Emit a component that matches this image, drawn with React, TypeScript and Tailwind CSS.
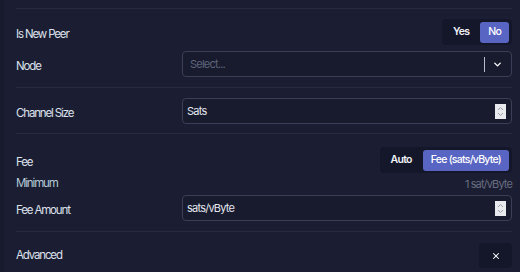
import { ChevronDown, X } from 'lucide-react';

// ─── Small pieces ────────────────────────────────────────────────────────────

const Divider = () => <div className="h-px bg-[#272b40]" />;

const Label = ({ children, tone = 'text-[#dde1ec]' }: { children: React.ReactNode; tone?: string }) => (
  <span className={`text-[11.5px] tracking-[-0.1em] ${tone}`}>{children}</span>
);

const Toggle = ({ options, active }: { options: string[]; active: number }) => (
  <div className="flex h-[26px] items-center gap-[3px] rounded-[4px] bg-[#14172a] p-[3px]">
    {options.map((o, i) => (
      <button
        key={o}
        className={`h-[21px] rounded-[3px] px-[8px] text-[10.5px] tracking-[-0.07em] ${
          i === active
            ? 'bg-[#5865c2] font-medium text-white'
            : 'font-semibold text-[#f1f2f7]'
        }`}
      >
        {o}
      </button>
    ))}
  </div>
);

const Stepper = () => (
  <div className="flex h-[15px] w-[11px] items-center justify-center bg-[#e9eaee]">
    <svg width="7" height="11" viewBox="0 0 7 11" fill="none" stroke="#9a9caa" strokeWidth="1">
      <path d="M1 4 L3.5 1.5 L6 4" />
      <path d="M1 7 L3.5 9.5 L6 7" />
    </svg>
  </div>
);

const Field = ({ children }: { children: React.ReactNode }) => (
  <div className="flex h-[26px] w-[330px] items-center rounded-[4px] border border-[#3a3f57] bg-[#181b2e] pl-[4px] pr-[5px]">
    {children}
  </div>
);

const Row = ({ label, children, className = '' }: { label: React.ReactNode; children: React.ReactNode; className?: string }) => (
  <div className={`flex items-center justify-between ${className}`}>
    <div className="w-[166px]">{label}</div>
    {children}
  </div>
);

// ─── Main ────────────────────────────────────────────────────────────────────

export default function App() {
  return (
    <div
      className="flex h-[272px] w-[520px] bg-[#1b1e32]"
      style={{ fontFamily: 'Inter, "Noto Sans", sans-serif' }}
    >
      <div className="w-[4px] bg-[#181b2d]" />
      <div className="flex flex-1 flex-col pl-[12px] pr-[8px] pt-[8px]">
        <Divider />

        {/* peer + node */}
        <Row label={<Label>Is New Peer</Label>} className="mt-[10px]">
          <Toggle options={['Yes', 'No']} active={1} />
        </Row>
        <Row label={<Label>Node</Label>} className="mt-[6px]">
          <Field>
            <span className="flex-1 pl-[3px] text-[11px] tracking-[-0.07em] text-[#5f6479]">Select...</span>
            <div className="mr-[7px] h-[15px] w-px bg-[#b9bccb]" />
            <ChevronDown className="mr-[3px] h-[11px] w-[11px] text-white" strokeWidth={3} />
          </Field>
        </Row>

        <div className="mt-[10px]">
          <Divider />
        </div>

        {/* channel size */}
        <Row label={<Label>Channel Size</Label>} className="mt-[10px]">
          <Field>
            <span className="flex-1 text-[11px] tracking-[-0.07em] text-[#e3e6ef]">Sats</span>
            <Stepper />
          </Field>
        </Row>

        <div className="mt-[9px]">
          <Divider />
        </div>

        {/* fee */}
        <Row label={<Label>Fee</Label>} className="mt-[13px]">
          <Toggle options={['Auto', 'Fee (sats/vByte)']} active={1} />
        </Row>
        <div className="mt-[4px] flex h-[14px] items-center justify-between">
          <Label tone="text-[#b3cad6]">Minimum</Label>
          <span className="text-[11px] tracking-[-0.08em] text-[#676c80]">1 sat/vByte</span>
        </div>
        <Row label={<Label>Fee Amount</Label>} className="mt-[4px]">
          <Field>
            <span className="flex-1 text-[11px] tracking-[-0.07em] text-[#e3e6ef]">sats/vByte</span>
            <Stepper />
          </Field>
        </Row>

        <div className="mt-[10px]">
          <Divider />
        </div>

        {/* advanced */}
        <div className="mt-[11px] flex items-center justify-between">
          <Label>Advanced</Label>
          <button className="flex h-[25px] w-[33px] items-center justify-center rounded-[4px] bg-[#14172a]">
            <X className="h-[10px] w-[10px] text-white" strokeWidth={2.5} />
          </button>
        </div>
      </div>
    </div>
  );
}
